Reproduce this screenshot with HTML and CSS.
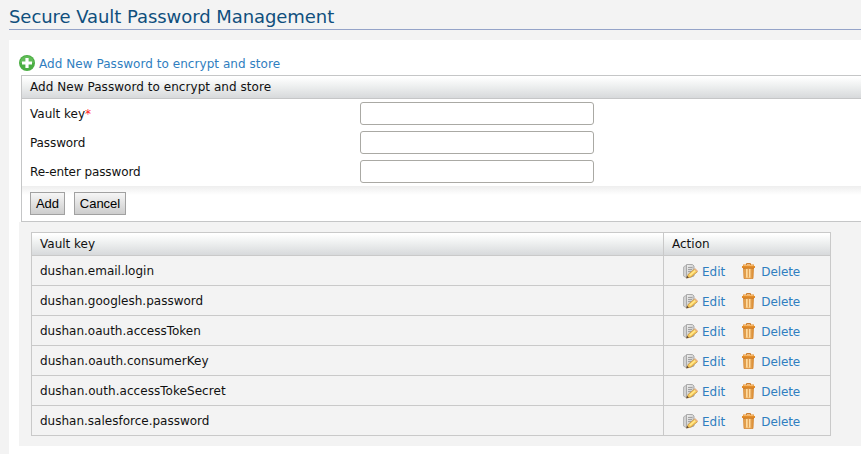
FILE: index.html
```
<!DOCTYPE html>
<html lang="en">
<head>
<meta charset="utf-8">
<title>Secure Vault Password Management</title>
<link rel="stylesheet" href="styles.css">
</head>
<body>
<svg width="0" height="0" class="defs" aria-hidden="true">
  <defs>
    <linearGradient id="bin" x1="0" x2="1" y1="0" y2="0"><stop offset="0" stop-color="#e29a3e"/><stop offset=".5" stop-color="#fbcb82"/><stop offset="1" stop-color="#dc8c2c"/></linearGradient>
    <linearGradient id="sheet" x1="0" x2="1" y1="0" y2="1"><stop offset="0" stop-color="#f0f0f0"/><stop offset="1" stop-color="#b8b8b8"/></linearGradient>
    <symbol id="edit" viewBox="0 0 16 16">
      <path d="M2 3.500L4 2.500H5V14L4 14.500L1.500 13V4Z" fill="#d2d2d2" stroke="#aaa" stroke-width=".8"/>
      <path d="M4.500 1.500H10.500L12 3V13L9 14H4.500Z" fill="url(#sheet)" stroke="#a3a3a3" stroke-width=".9"/>
      <path d="M6 4.500H10.500M6 6.500H10M6 8.500H9" stroke="#9b9b9b" stroke-width=".9" fill="none"/>
      <path d="M4.800 15L6.400 11.200L12.600 6L15.400 8.800L9 14Z" fill="#f8cb59" stroke="#c4923f" stroke-width=".8"/>
      <path d="M7.800 12.200L13.300 7.500" stroke="#ffe992" stroke-width="1.500" fill="none"/>
      <path d="M4 15.600L5.200 13L7 14.600Z" fill="#5a4634"/>
      <path d="M12.200 6.200L13.400 5.300L16 7.900L15 9Z" fill="#e9b184"/>
    </symbol>
    <symbol id="trash" viewBox="0 0 16 16">
      <path d="M2.500 5H12.500L12 15.500H3Z" fill="url(#bin)" stroke="#d48733" stroke-width=".8"/>
      <path d="M4.500 6V14.500M7.500 6V14.500M10.500 6V14.500" stroke="#dc9a4e" stroke-width=".9" fill="none"/>
      <path d="M5.700 6V14.500M8.700 6V14.500" stroke="#ffe2ae" fill="none"/>
      <path d="M5.500 2V.6H9.500V2" stroke="#c9751f" fill="none"/>
      <path d="M2 1.500H13V3H14V5H1V3H2Z" fill="#e38e2c"/>
      <path d="M2.500 2.500H12.500" stroke="#f7b766" fill="none"/>
      <path d="M2 5.200H13" stroke="#bd6a17" stroke-width=".6"/>
    </symbol>
  </defs>
</svg>
<h1>Secure Vault Password Management</h1>
<main>
  <a class="add-link"><svg width="16" height="16" viewBox="0 0 16 16"><circle cx="8" cy="8" r="8" fill="#4bae43"/><path d="M1 8a7 7 0 0 1 14 0Z" fill="#62bd59"/><path d="M8 3V13M3 8H13" stroke="#fff" stroke-width="3.200"/></svg><span>Add New Password to encrypt and store</span></a>
  <form class="vault-form">
    <div class="head">Add New Password to encrypt and store</div>
    <div class="fields">
      <label><span>Vault key<b>*</b></span><input type="text"></label>
      <label><span class="tight">Password</span><input type="password"></label>
      <label><span class="tight">Re-enter password</span><input type="password"></label>
    </div>
    <div class="buttons"><button class="add" type="button">Add</button><button class="cancel" type="button">Cancel</button></div>
  </form>
  <section>
    <table>
      <thead><tr><th class="key">Vault key</th><th>Action</th></tr></thead>
      <tbody>
        <tr><td>dushan.email.login</td><td><div class="actions"><a><svg><use href="#edit"/></svg><span>Edit</span></a><a><svg><use href="#trash"/></svg><span>Delete</span></a></div></td></tr>
        <tr><td>dushan.googlesh.password</td><td><div class="actions"><a><svg><use href="#edit"/></svg><span>Edit</span></a><a><svg><use href="#trash"/></svg><span>Delete</span></a></div></td></tr>
        <tr><td>dushan.oauth.accessToken</td><td><div class="actions"><a><svg><use href="#edit"/></svg><span>Edit</span></a><a><svg><use href="#trash"/></svg><span>Delete</span></a></div></td></tr>
        <tr><td class="wide">dushan.oauth.consumerKey</td><td><div class="actions"><a><svg><use href="#edit"/></svg><span>Edit</span></a><a><svg><use href="#trash"/></svg><span>Delete</span></a></div></td></tr>
        <tr><td class="wide">dushan.outh.accessTokeSecret</td><td><div class="actions"><a><svg><use href="#edit"/></svg><span>Edit</span></a><a><svg><use href="#trash"/></svg><span>Delete</span></a></div></td></tr>
        <tr><td>dushan.salesforce.password</td><td><div class="actions"><a><svg><use href="#edit"/></svg><span>Edit</span></a><a><svg><use href="#trash"/></svg><span>Delete</span></a></div></td></tr>
      </tbody>
    </table>
  </section>
</main>
</body>
</html>
```
FILE: styles.css
```
* { box-sizing: border-box; }
body {
  margin: 0 0 0 9px;
  height: 454px;
  overflow: hidden;
  background: #f3f3f3;
  color: #111;
  font: 12px/16px "DejaVu Sans", sans-serif;
}
.defs { display: block; }
h1 {
  margin: 0 0 10px;
  height: 30px;
  padding-top: 6px;
  border-bottom: 1px solid #94a3c8;
  color: #0f4f7d;
  font-size: 18px;
  font-weight: normal;
  line-height: 21px;
  letter-spacing: -0.06px;
}
main {
  height: 414px;
  padding: 15px 0 0 10px;
  background: #fff;
}
a { display: flex; align-items: center; color: #2f7ec0; }
.add-link { height: 16px; gap: 4px; letter-spacing: 0.05px; }
a span { padding-top: 2px; }
.vault-form {
  height: 147px;
  margin: 4px 0 0 2px;
  border: 1px solid #c5c6c7;
  border-right: 0;
}
.head {
  height: 23px;
  padding: 3px 8px 0;
  border-bottom: 1px solid #c5c6c7;
  background: linear-gradient(#fff 5%, #eef0f0 45%, #d7d9db);
  letter-spacing: 0.05px;
}
.fields { height: 87px; padding: 3px 8px 0; }
label { display: flex; align-items: center; height: 23px; margin-bottom: 6px; }
label span { width: 330px; }
.tight { letter-spacing: -0.1px; }
label b { color: #f22; font-weight: normal; }
input {
  width: 234px;
  height: 23px;
  margin: 0;
  padding: 2px 4px;
  border: 1px solid #aaa9a4;
  border-radius: 3px;
  background: #fff;
}
.buttons {
  display: flex;
  gap: 9px;
  height: 35px;
  padding: 6px 8px;
  background: linear-gradient(#eee, #fff 9px);
}
button {
  height: 23px;
  margin: 0;
  padding: 0;
  border: 1px solid #a1a1a1;
  background: linear-gradient(#f6f6f6, #cdcdcd);
  color: #000;
  font: 13px/20px "Liberation Sans", sans-serif;
}
.add { width: 35px; }
.cancel { width: 52px; }
section { height: 224px; padding: 10px 0 0 12px; background: #f3f3f3; }
table {
  width: 800px;
  border-collapse: separate;
  border-spacing: 0;
  border: solid #c9c9c9;
  border-width: 1px 0 0 1px;
  table-layout: fixed;
}
th, td {
  padding: 0 8px;
  border: solid #c9c9c9;
  border-width: 0 1px 1px 0;
  text-align: left;
  font-weight: normal;
}
th {
  height: 23px;
  background: linear-gradient(#fff 5%, #eef0f0 45%, #d7d9db);
}
td { height: 30px; }
.wide { letter-spacing: 0.05px; }
.key { width: 632px; }
.actions { display: flex; gap: 16px; padding-left: 10px; }
.actions a { height: 18px; gap: 4px; }
.actions a + a { letter-spacing: -0.1px; }
svg { flex: none; }
.actions svg { width: 16px; height: 16px; }
```
